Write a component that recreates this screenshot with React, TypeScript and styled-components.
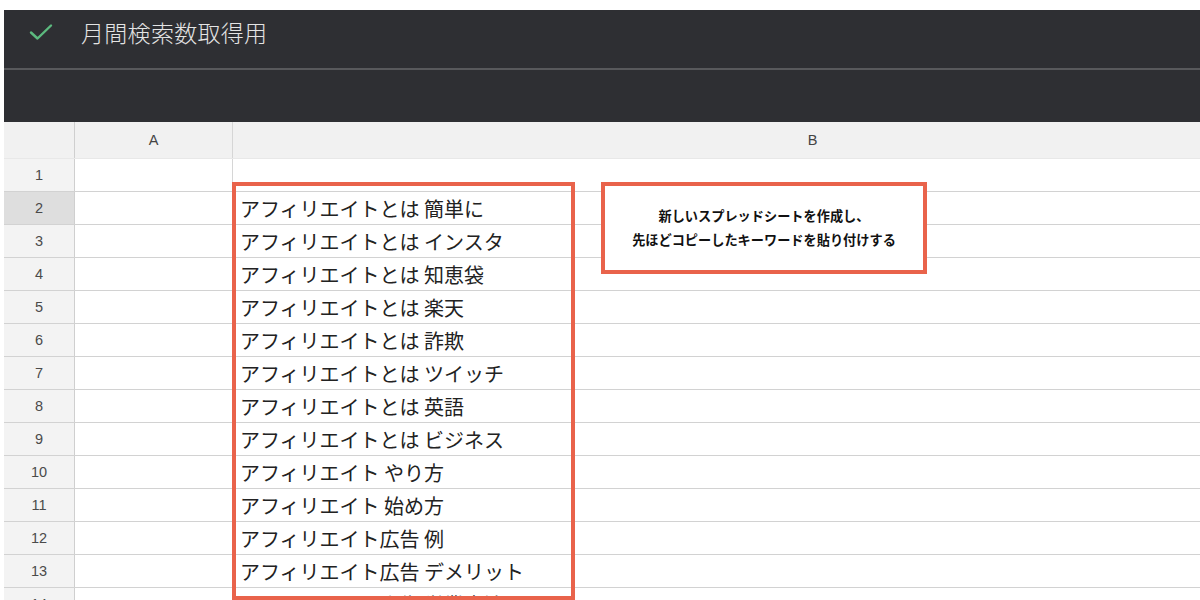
import React from "react";
import styled, { createGlobalStyle } from "styled-components";

const GlobalStyle = createGlobalStyle`
  html, body {
    margin: 0;
    padding: 0;
    background: #ffffff;
    overflow: hidden;
  }
  body {
    font-family: "Liberation Sans", Arial, "Noto Sans CJK JP", sans-serif;
  }
`;

const Page = styled.div`
  padding: 10px 0 0 4px;
  width: 1196px;
  height: 590px;
  overflow: hidden;
`;

const TopBar = styled.header`
  background: #2e2f33;
  display: flex;
  flex-direction: column;
`;

const TitleRow = styled.div`
  height: 60px;
  display: flex;
  align-items: center;
  gap: 28px;
  padding: 0 0 14px 25px;
  box-sizing: border-box;
  border-bottom: 2px solid #58595c;
`;

const Title = styled.h1`
  margin: 0;
  font-family: "Noto Sans CJK JP", sans-serif;
  font-weight: 300;
  font-size: 23px;
  color: #e4e4e4;
  letter-spacing: 0.3px;
`;

const Toolbar = styled.div`
  height: 52px;
`;

const Sheet = styled.div`
  position: relative;
`;

const GridRow = styled.div<{ $header?: boolean }>`
  display: grid;
  grid-template-columns: 71px 158px 1160px;
  height: ${(p) => (p.$header ? "37px" : "33px")};
  box-sizing: border-box;
  border-bottom: 1px solid ${(p) => (p.$header ? "#e8e8e8" : "#d2d2d2")};
  background: ${(p) => (p.$header ? "#f1f1f1" : "#ffffff")};
`;

const RowNum = styled.div<{ $selected?: boolean; $header?: boolean }>`
  display: flex;
  align-items: center;
  justify-content: center;
  background: ${(p) => (p.$selected ? "#dedede" : p.$header ? "#f1f1f1" : "#f3f3f3")};
  border-right: 1px solid #cfcfcf;
  font-size: 14.5px;
  color: #4a4a4a;
`;

const ColHead = styled.div`
  display: flex;
  align-items: center;
  justify-content: center;
  border-right: 1px solid #d6d6d6;
  font-size: 14.5px;
  color: #444;
`;

const Cell = styled.div`
  display: flex;
  align-items: center;
  border-right: 1px solid #d6d6d6;
  padding-left: 7px;
  font-family: "Noto Sans CJK JP", sans-serif;
  font-size: 20px;
  color: #222;
  white-space: nowrap;
  overflow: hidden;
`;

const Highlight = styled.div`
  position: absolute;
  left: 228px;
  top: 60px;
  width: 343px;
  height: 418px;
  box-sizing: border-box;
  border: 4px solid #e9634b;
  pointer-events: none;
`;

const Callout = styled.div`
  position: absolute;
  left: 597px;
  top: 60px;
  width: 326px;
  height: 92px;
  box-sizing: border-box;
  border: 4px solid #e9634b;
  background: #ffffff;
  display: flex;
  align-items: center;
  justify-content: center;
  text-align: center;
  font-family: "Noto Sans CJK JP", sans-serif;
  font-weight: 700;
  font-size: 13.2px;
  line-height: 24px;
  color: #111;
`;

const CheckIcon = () => (
  <svg width="24" height="18" viewBox="0 0 24 18" fill="none">
    <path d="M2 9.5 L8.5 15.5 L22 2.5" stroke="#5cba7f" strokeWidth="2.4" strokeLinecap="round" strokeLinejoin="round" />
  </svg>
);

const keywords = [
  "",
  "アフィリエイトとは 簡単に",
  "アフィリエイトとは インスタ",
  "アフィリエイトとは 知恵袋",
  "アフィリエイトとは 楽天",
  "アフィリエイトとは 詐欺",
  "アフィリエイトとは ツイッチ",
  "アフィリエイトとは 英語",
  "アフィリエイトとは ビジネス",
  "アフィリエイト やり方",
  "アフィリエイト 始め方",
  "アフィリエイト広告 例",
  "アフィリエイト広告 デメリット",
  "アフィリエイト広告 営業方法",
];

export default function App() {
  return (
    <>
      <GlobalStyle />
      <Page>
        <TopBar>
          <TitleRow>
            <CheckIcon />
            <Title>月間検索数取得用</Title>
          </TitleRow>
          <Toolbar />
        </TopBar>
        <Sheet>
          <GridRow $header>
            <RowNum $header />
            <ColHead>A</ColHead>
            <ColHead>B</ColHead>
          </GridRow>
          {keywords.map((kw, i) => (
            <GridRow key={i}>
              <RowNum $selected={i === 1}>{i + 1}</RowNum>
              <Cell />
              <Cell>{kw}</Cell>
            </GridRow>
          ))}
          <Highlight />
          <Callout>
            新しいスプレッドシートを作成し、
            <br />
            先ほどコピーしたキーワードを貼り付けする
          </Callout>
        </Sheet>
      </Page>
    </>
  );
}
